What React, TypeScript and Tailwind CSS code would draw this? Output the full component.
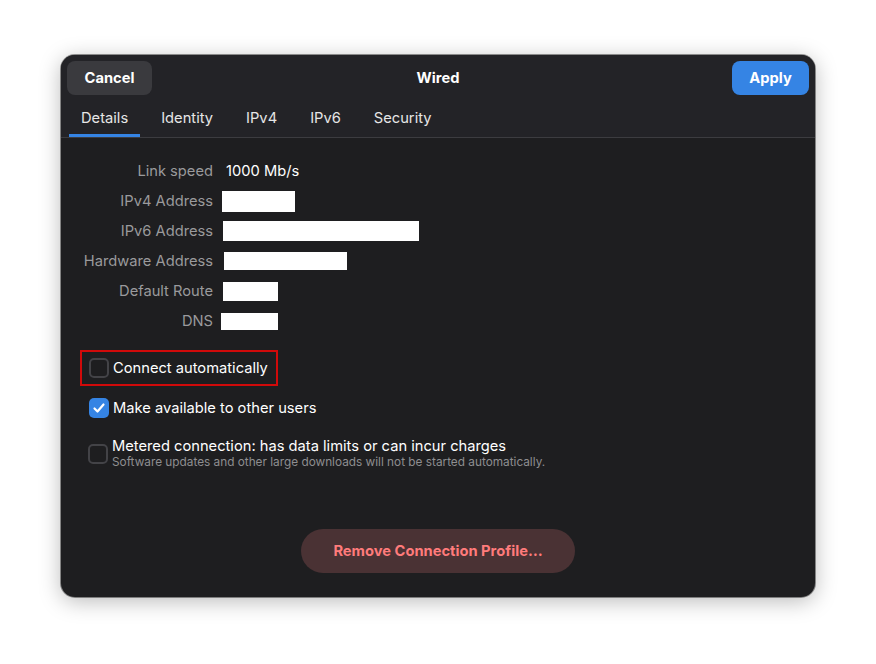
import { useState } from "react";

const tabs = ["Details", "Identity", "IPv4", "IPv6", "Security"];

// redacted values are shown as plain white blocks
const rows: { label: string; value?: string; block?: string }[] = [
  { label: "Link speed", value: "1000 Mb/s" },
  { label: "IPv4 Address", block: "w-[73px] h-[21px] ml-[-3px]" },
  { label: "IPv6 Address", block: "w-[196px] h-[20px] ml-[-2px]" },
  { label: "Hardware Address", block: "w-[123px] h-[18px] ml-[-1px]" },
  { label: "Default Route", block: "w-[55px] h-[19px] ml-[-2px]" },
  { label: "DNS", block: "w-[57px] h-[17px] ml-[-4px]" },
];

const Check = ({ checked }: { checked: boolean }) =>
  checked ? (
    <span className="w-5 h-5 rounded-[5px] bg-[#3584e4] flex items-center justify-center shrink-0">
      <svg width="14" height="14" viewBox="0 0 14 14" fill="none">
        <path d="M2.5 7.5l3 3 6-7" stroke="white" strokeWidth="2.2" strokeLinecap="round" strokeLinejoin="round" />
      </svg>
    </span>
  ) : (
    <span className="w-5 h-5 rounded-[5px] border-2 border-[#434347] shrink-0" />
  );

export default function App() {
  const [tab, setTab] = useState(0);
  const [auto, setAuto] = useState(false);
  const [shared, setShared] = useState(true);
  const [metered, setMetered] = useState(false);

  return (
    <div
      className="min-h-screen bg-white flex justify-center"
      style={{ fontFamily: "Inter, 'Noto Sans', sans-serif" }}
    >
      <div className="mt-[55px] w-[754px] h-[542px] rounded-[14px] overflow-hidden bg-[#1e1e20] flex flex-col shadow-[0_4px_22px_rgba(0,0,0,0.28)] ring-1 ring-black/40">
        <div className="bg-[#232327] border-b border-[#3c3c40]">
          <div className="grid grid-cols-[1fr_auto_1fr] items-center p-[6px]">
            <button className="justify-self-start h-[34px] w-[85px] rounded-[8px] bg-[#3a3a3e] text-white text-[14.7px] font-bold">
              Cancel
            </button>
            <span className="text-white text-[14.7px] font-bold">Wired</span>
            <button className="justify-self-end h-[34px] w-[77px] rounded-[8px] bg-[#3584e4] text-white text-[14.7px] font-bold">
              Apply
            </button>
          </div>
          <div className="flex gap-[9px] px-2 h-[36px]">
            {tabs.map((t, i) => (
              <button
                key={t}
                onClick={() => setTab(i)}
                className={
                  "px-3 text-[14.7px] text-[#e6e6e6] border-b-[3px] pt-[2px] " +
                  (i === tab ? "border-[#3584e4]" : "border-transparent")
                }
              >
                {t}
              </button>
            ))}
          </div>
        </div>

        <div className="flex-1 flex flex-col">
          <div className="pt-[18px] pl-[24px] grid grid-cols-[128px_1fr] gap-x-[12px]">
            {rows.map((r) => (
              <div key={r.label} className="contents">
                <div className="h-[30px] flex items-center justify-end text-[14.7px] text-[#9a9a9c] whitespace-nowrap">
                  {r.label}
                </div>
                <div className="h-[30px] flex items-center">
                  {r.value ? (
                    <span className="text-[14.7px] text-white ml-[1px]">{r.value}</span>
                  ) : (
                    <span className={"bg-white " + r.block} />
                  )}
                </div>
              </div>
            ))}
          </div>

          <div className="mt-[14px] pl-[19px] flex flex-col">
            <div className="self-start border-2 border-[#d10a0a] h-[36px] w-[198px] flex items-center pl-[7px]">
              <button onClick={() => setAuto(!auto)} className="flex items-center gap-[4px] text-[14.7px] text-white whitespace-nowrap">
                <Check checked={auto} />
                Connect automatically
              </button>
            </div>
            <button
              onClick={() => setShared(!shared)}
              className="mt-[12px] ml-[9px] flex items-center gap-[4px] text-[14.7px] text-white h-[20px]"
            >
              <Check checked={shared} />
              Make available to other users
            </button>
            <button
              onClick={() => setMetered(!metered)}
              className="mt-[19px] ml-[8px] flex items-center gap-[4px] text-left"
            >
              <Check checked={metered} />
              <span className="flex flex-col">
                <span className="text-[14.7px] text-white leading-[18px]">
                  Metered connection: has data limits or can incur charges
                </span>
                <span className="text-[11.8px] text-[#8e8e90] leading-[15px]">
                  Software updates and other large downloads will not be started automatically.
                </span>
              </span>
            </button>
          </div>

          <div className="mt-auto pb-[24px] flex justify-center">
            <button className="h-[44px] w-[274px] rounded-full bg-[#4a3234] text-[#ff7b7b] text-[14.7px] font-bold">
              Remove Connection Profile…
            </button>
          </div>
        </div>
      </div>
    </div>
  );
}
